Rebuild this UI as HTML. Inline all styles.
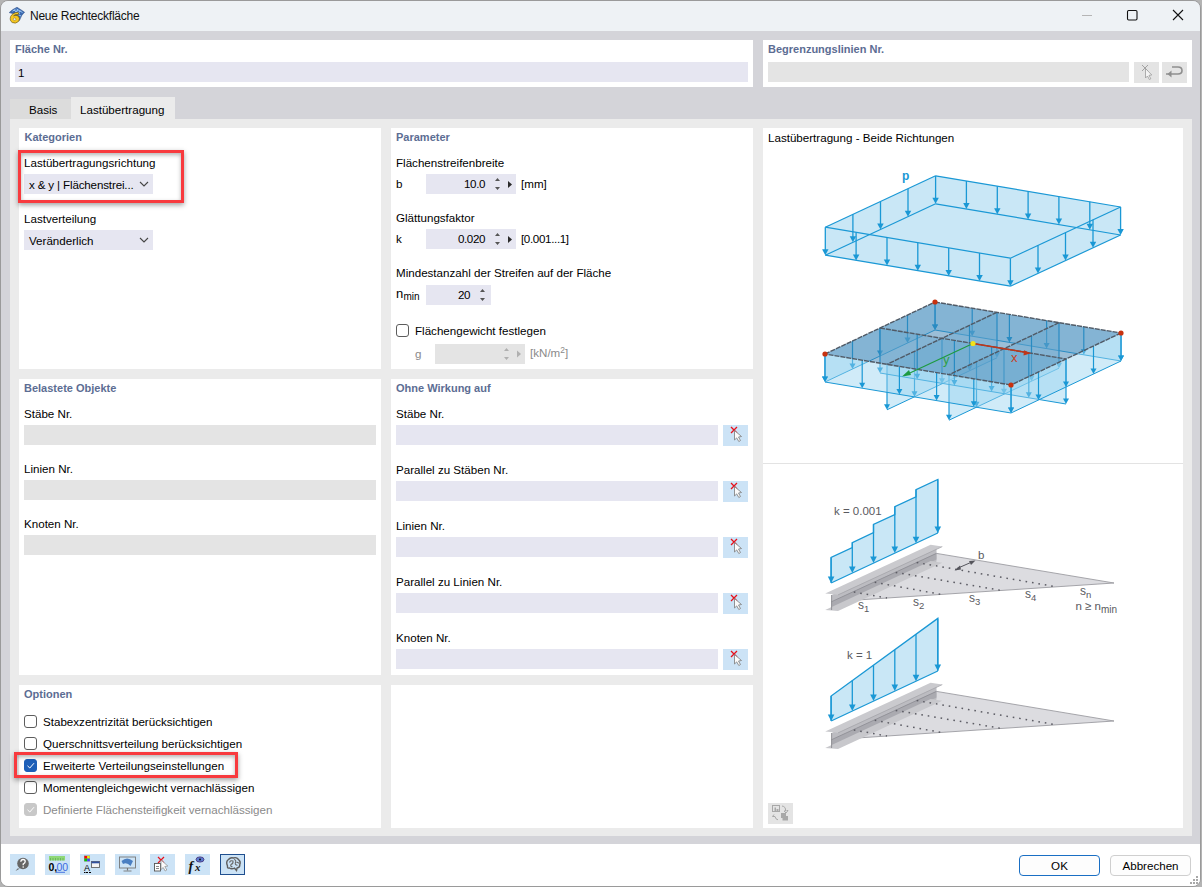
<!DOCTYPE html>
<html><head><meta charset="utf-8">
<style>
*{box-sizing:border-box;margin:0;padding:0}
html,body{width:1202px;height:887px;overflow:hidden;background:#b4b4b4}
body{position:relative;font-family:"Liberation Sans",sans-serif;font-size:11.6px;color:#000}
.a{position:absolute}
.t{position:absolute;white-space:nowrap;line-height:14px}
.h{position:absolute;white-space:nowrap;line-height:14px;font-weight:bold;font-size:11px;color:#5c6d93}
.p{position:absolute;background:#fff}
.in{position:absolute;background:#e6e6f1;height:20px}
.dis{position:absolute;background:#e4e4e4;height:20px}
.cb{position:absolute;width:13px;height:13px;border:1px solid #5d5d5d;border-radius:3px;background:#fff}
.btnb{position:absolute;width:25px;height:21px;background:#cce3f6}
</style></head><body>
<!-- window -->
<div class="a" style="left:0;top:0;width:1201px;height:887px;border:1px solid #9a9a9a;border-radius:8px;background:#d4d4d9;overflow:hidden">
  <div class="a" style="left:0;top:0;width:1199px;height:30px;background:#eef2f5"></div>
  <div class="a" style="left:0;top:843px;width:1199px;height:44px;background:#ffffff"></div>
</div>
<div class="t" style="left:30px;top:8.5px;font-size:12px;letter-spacing:-0.25px;color:#111">Neue Rechteckfläche</div>

<!-- top panels -->
<div class="p" style="left:10px;top:40px;width:743px;height:47px"></div>
<div class="h" style="left:15px;top:42px">Fläche Nr.</div>
<div class="in" style="left:15px;top:62px;width:733px"></div>
<div class="t" style="left:18px;top:66px">1</div>

<div class="p" style="left:763px;top:40px;width:429px;height:47px"></div>
<div class="h" style="left:768px;top:42px">Begrenzungslinien Nr.</div>
<div class="dis" style="left:768px;top:62px;width:361px"></div>
<div class="dis" style="left:1134px;top:62px;width:25px;height:21px"></div>
<div class="dis" style="left:1162px;top:62px;width:25px;height:21px"></div>

<!-- tabs -->
<div class="a" style="left:10px;top:99px;width:61px;height:20px;background:#dcdcdc"></div>
<div class="a" style="left:71px;top:97px;width:104px;height:22px;background:#ebebeb"></div>
<div class="t" style="left:29px;top:103px">Basis</div>
<div class="t" style="left:80px;top:103px">Lastübertragung</div>

<!-- content area -->
<div class="a" style="left:10px;top:119px;width:1182px;height:717px;background:#ebebeb"></div>

<div class="p" style="left:19px;top:128px;width:362px;height:241px"></div>
<div class="p" style="left:391px;top:128px;width:362px;height:241px"></div>
<div class="p" style="left:19px;top:379px;width:362px;height:296px"></div>
<div class="p" style="left:391px;top:379px;width:362px;height:296px"></div>
<div class="p" style="left:19px;top:685px;width:362px;height:143px"></div>
<div class="p" style="left:391px;top:685px;width:362px;height:143px"></div>
<div class="p" style="left:763px;top:128px;width:420px;height:700px"></div>

<!-- Kategorien -->
<div class="h" style="left:24.5px;top:130px">Kategorien</div>
<div class="t" style="left:24px;top:156px">Lastübertragungsrichtung</div>
<div class="in" style="left:24px;top:174px;width:129px"></div>
<div class="t" style="left:29px;top:178px;letter-spacing:-0.15px">x &amp; y | Flächenstrei...</div>
<div class="t" style="left:24px;top:212px">Lastverteilung</div>
<div class="in" style="left:24px;top:230px;width:129px"></div>
<div class="t" style="left:29px;top:234px">Veränderlich</div>


<!-- Parameter -->
<div class="h" style="left:396px;top:130px">Parameter</div>
<div class="t" style="left:396px;top:156px">Flächenstreifenbreite</div>
<div class="t" style="left:396px;top:177px">b</div>
<div class="in" style="left:426px;top:174px;width:90px"></div>
<div class="t" style="left:426px;top:177px;width:59px;text-align:right;letter-spacing:-0.4px">10.0</div>
<div class="t" style="left:521px;top:177px">[mm]</div>
<div class="t" style="left:396px;top:211px">Glättungsfaktor</div>
<div class="t" style="left:396px;top:232px">k</div>
<div class="in" style="left:426px;top:229px;width:90px"></div>
<div class="t" style="left:426px;top:232px;width:59px;text-align:right;letter-spacing:-0.4px">0.020</div>
<div class="t" style="left:521px;top:232px;letter-spacing:-0.35px">[0.001...1]</div>
<div class="t" style="left:396px;top:266px">Mindestanzahl der Streifen auf der Fläche</div>
<div class="t" style="left:396px;top:287px;font-size:13px">n</div><div class="t" style="left:403.5px;top:290px;font-size:10px">min</div>
<div class="in" style="left:426px;top:285px;width:65px"></div>
<div class="t" style="left:426px;top:288px;width:44px;text-align:right;letter-spacing:-0.4px">20</div>
<div class="cb" style="left:396px;top:324px"></div>
<div class="t" style="left:415px;top:324px">Flächengewicht festlegen</div>
<div class="t" style="left:415px;top:347px;color:#8a8a8a">g</div>
<div class="dis" style="left:435px;top:344px;width:90px"></div>
<div class="t" style="left:530px;top:346px;color:#8a8a8a">[kN/m<span style="font-size:8.5px;position:relative;top:-4px">2</span>]</div>

<!-- Belastete Objekte -->
<div class="h" style="left:24px;top:381px">Belastete Objekte</div>
<div class="t" style="left:24px;top:407px">Stäbe Nr.</div>
<div class="dis" style="left:24px;top:425px;width:352px"></div>
<div class="t" style="left:24px;top:462px">Linien Nr.</div>
<div class="dis" style="left:24px;top:480px;width:352px"></div>
<div class="t" style="left:24px;top:517px">Knoten Nr.</div>
<div class="dis" style="left:24px;top:535px;width:352px"></div>

<!-- Ohne Wirkung auf -->
<div class="h" style="left:396px;top:381px">Ohne Wirkung auf</div>
<div class="t" style="left:396px;top:407px">Stäbe Nr.</div>
<div class="in" style="left:396px;top:425px;width:322px"></div>
<div class="btnb" style="left:723px;top:425px"></div>
<div class="t" style="left:396px;top:463px">Parallel zu Stäben Nr.</div>
<div class="in" style="left:396px;top:481px;width:322px"></div>
<div class="btnb" style="left:723px;top:481px"></div>
<div class="t" style="left:396px;top:519px">Linien Nr.</div>
<div class="in" style="left:396px;top:537px;width:322px"></div>
<div class="btnb" style="left:723px;top:537px"></div>
<div class="t" style="left:396px;top:575px">Parallel zu Linien Nr.</div>
<div class="in" style="left:396px;top:593px;width:322px"></div>
<div class="btnb" style="left:723px;top:593px"></div>
<div class="t" style="left:396px;top:631px">Knoten Nr.</div>
<div class="in" style="left:396px;top:649px;width:322px"></div>
<div class="btnb" style="left:723px;top:649px"></div>

<!-- Optionen -->
<div class="h" style="left:24px;top:687px">Optionen</div>
<div class="cb" style="left:24px;top:715px"></div>
<div class="t" style="left:43px;top:715px">Stabexzentrizität berücksichtigen</div>
<div class="cb" style="left:24px;top:737px"></div>
<div class="t" style="left:43px;top:737px">Querschnittsverteilung berücksichtigen</div>
<div class="cb" style="left:24px;top:759px;background:#1d5fb8;border-color:#1d5fb8"></div>
<div class="t" style="left:43px;top:759px">Erweiterte Verteilungseinstellungen</div>
<div class="cb" style="left:24px;top:781px"></div>
<div class="t" style="left:43px;top:781px">Momentengleichgewicht vernachlässigen</div>
<div class="cb" style="left:24px;top:803px;background:#c8c8c8;border-color:#c8c8c8"></div>
<div class="t" style="left:43px;top:803px;color:#8a8a8a">Definierte Flächensteifigkeit vernachlässigen</div>

<!-- right panel -->
<div class="t" style="left:768px;top:131px">Lastübertragung - Beide Richtungen</div>
<div class="a" style="left:763px;top:463px;width:420px;height:1px;background:#e3e3e3"></div>
<div class="dis" style="left:768px;top:803px;width:25px;height:21px"></div>

<!-- bottom -->
<div class="btnb" style="left:10px;top:854px"></div>
<div class="btnb" style="left:45px;top:854px"></div>
<div class="btnb" style="left:80px;top:854px"></div>
<div class="btnb" style="left:115px;top:854px"></div>
<div class="btnb" style="left:150px;top:854px"></div>
<div class="btnb" style="left:185px;top:854px"></div>
<div class="btnb" style="left:220px;top:854px;border:1px solid #1f4f8f"></div>
<div class="a" style="left:1019px;top:855px;width:81px;height:21px;border:1px solid #1a6fc4;border-radius:4px;background:#fdfdfd"></div>
<div class="t" style="left:1019px;top:859px;width:81px;text-align:center">OK</div>
<div class="a" style="left:1110px;top:855px;width:81px;height:21px;border:1px solid #cfcfcf;border-radius:4px;background:#fdfdfd"></div>
<div class="t" style="left:1110px;top:859px;width:81px;text-align:center">Abbrechen</div>
<!--FIG--><svg class="a" style="left:0;top:0" width="1202" height="887"><polygon points="825.3,227.2 935.6,175.8 1120.6,207.0 1120.6,235.0 1010.4,286.2 825.3,255.2" fill="#c9e7f6" /><line x1="935.6" y1="175.8" x2="1120.6" y2="207.0" stroke="#1a98d5" stroke-width="1.2" /><line x1="935.6" y1="203.8" x2="1120.6" y2="235.0" stroke="#1a98d5" stroke-width="1.2" /><line x1="1120.6" y1="207.0" x2="1010.4" y2="258.2" stroke="#1a98d5" stroke-width="1.2" /><line x1="1120.6" y1="235.0" x2="1010.4" y2="286.2" stroke="#1a98d5" stroke-width="1.2" /><line x1="1010.4" y1="258.2" x2="825.3" y2="227.2" stroke="#1a98d5" stroke-width="1.2" /><line x1="1010.4" y1="286.2" x2="825.3" y2="255.2" stroke="#1a98d5" stroke-width="1.2" /><line x1="825.3" y1="227.2" x2="935.6" y2="175.8" stroke="#1a98d5" stroke-width="1.2" /><line x1="825.3" y1="255.2" x2="935.6" y2="203.8" stroke="#1a98d5" stroke-width="1.2" /><line x1="825.3" y1="227.2" x2="825.3" y2="250.2" stroke="#1a98d5" stroke-width="1.3"/><polygon points="822.1,249.2 828.5,249.2 825.3,255.2" fill="#1a98d5"/><line x1="852.9" y1="214.3" x2="852.9" y2="237.3" stroke="#1a98d5" stroke-width="1.3"/><polygon points="849.7,236.3 856.1,236.3 852.9,242.3" fill="#1a98d5"/><line x1="880.5" y1="201.5" x2="880.5" y2="224.5" stroke="#1a98d5" stroke-width="1.3"/><polygon points="877.2,223.5 883.7,223.5 880.5,229.5" fill="#1a98d5"/><line x1="908.0" y1="188.7" x2="908.0" y2="211.7" stroke="#1a98d5" stroke-width="1.3"/><polygon points="904.8,210.7 911.2,210.7 908.0,216.7" fill="#1a98d5"/><line x1="935.6" y1="175.8" x2="935.6" y2="198.8" stroke="#1a98d5" stroke-width="1.3"/><polygon points="932.4,197.8 938.8,197.8 935.6,203.8" fill="#1a98d5"/><line x1="966.4" y1="181.0" x2="966.4" y2="204.0" stroke="#1a98d5" stroke-width="1.3"/><polygon points="963.2,203.0 969.6,203.0 966.4,209.0" fill="#1a98d5"/><line x1="997.3" y1="186.2" x2="997.3" y2="209.2" stroke="#1a98d5" stroke-width="1.3"/><polygon points="994.1,208.2 1000.5,208.2 997.3,214.2" fill="#1a98d5"/><line x1="1028.1" y1="191.4" x2="1028.1" y2="214.4" stroke="#1a98d5" stroke-width="1.3"/><polygon points="1024.9,213.4 1031.3,213.4 1028.1,219.4" fill="#1a98d5"/><line x1="1058.9" y1="196.6" x2="1058.9" y2="219.6" stroke="#1a98d5" stroke-width="1.3"/><polygon points="1055.7,218.6 1062.1,218.6 1058.9,224.6" fill="#1a98d5"/><line x1="1089.8" y1="201.8" x2="1089.8" y2="224.8" stroke="#1a98d5" stroke-width="1.3"/><polygon points="1086.6,223.8 1093.0,223.8 1089.8,229.8" fill="#1a98d5"/><line x1="1120.6" y1="207.0" x2="1120.6" y2="230.0" stroke="#1a98d5" stroke-width="1.3"/><polygon points="1117.4,229.0 1123.8,229.0 1120.6,235.0" fill="#1a98d5"/><line x1="1093.0" y1="219.8" x2="1093.0" y2="242.8" stroke="#1a98d5" stroke-width="1.3"/><polygon points="1089.8,241.8 1096.2,241.8 1093.0,247.8" fill="#1a98d5"/><line x1="1065.5" y1="232.6" x2="1065.5" y2="255.6" stroke="#1a98d5" stroke-width="1.3"/><polygon points="1062.3,254.6 1068.7,254.6 1065.5,260.6" fill="#1a98d5"/><line x1="1038.0" y1="245.4" x2="1038.0" y2="268.4" stroke="#1a98d5" stroke-width="1.3"/><polygon points="1034.8,267.4 1041.2,267.4 1038.0,273.4" fill="#1a98d5"/><line x1="1010.4" y1="258.2" x2="1010.4" y2="281.2" stroke="#1a98d5" stroke-width="1.3"/><polygon points="1007.2,280.2 1013.6,280.2 1010.4,286.2" fill="#1a98d5"/><line x1="979.5" y1="253.0" x2="979.5" y2="276.0" stroke="#1a98d5" stroke-width="1.3"/><polygon points="976.3,275.0 982.8,275.0 979.5,281.0" fill="#1a98d5"/><line x1="948.7" y1="247.9" x2="948.7" y2="270.9" stroke="#1a98d5" stroke-width="1.3"/><polygon points="945.5,269.9 951.9,269.9 948.7,275.9" fill="#1a98d5"/><line x1="917.8" y1="242.7" x2="917.8" y2="265.7" stroke="#1a98d5" stroke-width="1.3"/><polygon points="914.6,264.7 921.0,264.7 917.8,270.7" fill="#1a98d5"/><line x1="887.0" y1="237.5" x2="887.0" y2="260.5" stroke="#1a98d5" stroke-width="1.3"/><polygon points="883.8,259.5 890.2,259.5 887.0,265.5" fill="#1a98d5"/><line x1="856.1" y1="232.4" x2="856.1" y2="255.4" stroke="#1a98d5" stroke-width="1.3"/><polygon points="852.9,254.4 859.4,254.4 856.1,260.4" fill="#1a98d5"/><text x="902" y="180" font-family="Liberation Sans" font-weight="bold" font-size="12" fill="#1a98d5">p</text><polygon points="935.0,302.0 1121.0,333.0 1121.0,361.0 935.0,330.0" fill="rgba(150,210,240,0.45)" /><line x1="935.0" y1="330.0" x2="1121.0" y2="361.0" stroke="#1a98d5" stroke-width="1" /><line x1="935.0" y1="302.0" x2="935.0" y2="325.5" stroke="#1a98d5" stroke-width="1.2"/><polygon points="932.0,324.5 938.0,324.5 935.0,330.0" fill="#1a98d5"/><line x1="972.2" y1="308.2" x2="972.2" y2="331.7" stroke="#1a98d5" stroke-width="1.2"/><polygon points="969.2,330.7 975.2,330.7 972.2,336.2" fill="#1a98d5"/><line x1="1009.4" y1="314.4" x2="1009.4" y2="337.9" stroke="#1a98d5" stroke-width="1.2"/><polygon points="1006.4,336.9 1012.4,336.9 1009.4,342.4" fill="#1a98d5"/><line x1="1046.6" y1="320.6" x2="1046.6" y2="344.1" stroke="#1a98d5" stroke-width="1.2"/><polygon points="1043.6,343.1 1049.6,343.1 1046.6,348.6" fill="#1a98d5"/><line x1="1083.8" y1="326.8" x2="1083.8" y2="350.3" stroke="#1a98d5" stroke-width="1.2"/><polygon points="1080.8,349.3 1086.8,349.3 1083.8,354.8" fill="#1a98d5"/><line x1="1121.0" y1="333.0" x2="1121.0" y2="356.5" stroke="#1a98d5" stroke-width="1.2"/><polygon points="1118.0,355.5 1124.0,355.5 1121.0,361.0" fill="#1a98d5"/><polygon points="935.0,302.0 825.0,354.0 825.0,382.0 935.0,330.0" fill="rgba(150,210,240,0.45)" /><line x1="935.0" y1="330.0" x2="825.0" y2="382.0" stroke="#1a98d5" stroke-width="1" /><line x1="935.0" y1="302.0" x2="935.0" y2="325.5" stroke="#1a98d5" stroke-width="1.2"/><polygon points="932.0,324.5 938.0,324.5 935.0,330.0" fill="#1a98d5"/><line x1="907.5" y1="315.0" x2="907.5" y2="338.5" stroke="#1a98d5" stroke-width="1.2"/><polygon points="904.5,337.5 910.5,337.5 907.5,343.0" fill="#1a98d5"/><line x1="880.0" y1="328.0" x2="880.0" y2="351.5" stroke="#1a98d5" stroke-width="1.2"/><polygon points="877.0,350.5 883.0,350.5 880.0,356.0" fill="#1a98d5"/><line x1="852.5" y1="341.0" x2="852.5" y2="364.5" stroke="#1a98d5" stroke-width="1.2"/><polygon points="849.5,363.5 855.5,363.5 852.5,369.0" fill="#1a98d5"/><line x1="825.0" y1="354.0" x2="825.0" y2="377.5" stroke="#1a98d5" stroke-width="1.2"/><polygon points="822.0,376.5 828.0,376.5 825.0,382.0" fill="#1a98d5"/><polygon points="997.0,312.3 887.0,364.3 887.0,409.8 997.0,357.8" fill="rgba(150,210,240,0.45)" /><line x1="997.0" y1="357.8" x2="887.0" y2="409.8" stroke="#1a98d5" stroke-width="1" /><line x1="997.0" y1="312.3" x2="997.0" y2="353.3" stroke="#1a98d5" stroke-width="1.2"/><polygon points="994.0,352.3 1000.0,352.3 997.0,357.8" fill="#1a98d5"/><line x1="969.5" y1="325.3" x2="969.5" y2="366.3" stroke="#1a98d5" stroke-width="1.2"/><polygon points="966.5,365.3 972.5,365.3 969.5,370.8" fill="#1a98d5"/><line x1="942.0" y1="338.3" x2="942.0" y2="379.3" stroke="#1a98d5" stroke-width="1.2"/><polygon points="939.0,378.3 945.0,378.3 942.0,383.8" fill="#1a98d5"/><line x1="914.5" y1="351.3" x2="914.5" y2="392.3" stroke="#1a98d5" stroke-width="1.2"/><polygon points="911.5,391.3 917.5,391.3 914.5,396.8" fill="#1a98d5"/><line x1="887.0" y1="364.3" x2="887.0" y2="405.3" stroke="#1a98d5" stroke-width="1.2"/><polygon points="884.0,404.3 890.0,404.3 887.0,409.8" fill="#1a98d5"/><polygon points="1059.0,322.7 949.0,374.7 949.0,420.2 1059.0,368.2" fill="rgba(150,210,240,0.45)" /><line x1="1059.0" y1="368.2" x2="949.0" y2="420.2" stroke="#1a98d5" stroke-width="1" /><line x1="1059.0" y1="322.7" x2="1059.0" y2="363.7" stroke="#1a98d5" stroke-width="1.2"/><polygon points="1056.0,362.7 1062.0,362.7 1059.0,368.2" fill="#1a98d5"/><line x1="1031.5" y1="335.7" x2="1031.5" y2="376.7" stroke="#1a98d5" stroke-width="1.2"/><polygon points="1028.5,375.7 1034.5,375.7 1031.5,381.2" fill="#1a98d5"/><line x1="1004.0" y1="348.7" x2="1004.0" y2="389.7" stroke="#1a98d5" stroke-width="1.2"/><polygon points="1001.0,388.7 1007.0,388.7 1004.0,394.2" fill="#1a98d5"/><line x1="976.5" y1="361.7" x2="976.5" y2="402.7" stroke="#1a98d5" stroke-width="1.2"/><polygon points="973.5,401.7 979.5,401.7 976.5,407.2" fill="#1a98d5"/><line x1="949.0" y1="374.7" x2="949.0" y2="415.7" stroke="#1a98d5" stroke-width="1.2"/><polygon points="946.0,414.7 952.0,414.7 949.0,420.2" fill="#1a98d5"/><polygon points="880.0,328.0 1066.0,359.0 1066.0,404.0 880.0,373.0" fill="rgba(150,210,240,0.45)" /><line x1="880.0" y1="373.0" x2="1066.0" y2="404.0" stroke="#1a98d5" stroke-width="1" /><line x1="880.0" y1="328.0" x2="880.0" y2="368.5" stroke="#1a98d5" stroke-width="1.2"/><polygon points="877.0,367.5 883.0,367.5 880.0,373.0" fill="#1a98d5"/><line x1="917.2" y1="334.2" x2="917.2" y2="374.7" stroke="#1a98d5" stroke-width="1.2"/><polygon points="914.2,373.7 920.2,373.7 917.2,379.2" fill="#1a98d5"/><line x1="954.4" y1="340.4" x2="954.4" y2="380.9" stroke="#1a98d5" stroke-width="1.2"/><polygon points="951.4,379.9 957.4,379.9 954.4,385.4" fill="#1a98d5"/><line x1="991.6" y1="346.6" x2="991.6" y2="387.1" stroke="#1a98d5" stroke-width="1.2"/><polygon points="988.6,386.1 994.6,386.1 991.6,391.6" fill="#1a98d5"/><line x1="1028.8" y1="352.8" x2="1028.8" y2="393.3" stroke="#1a98d5" stroke-width="1.2"/><polygon points="1025.8,392.3 1031.8,392.3 1028.8,397.8" fill="#1a98d5"/><line x1="1066.0" y1="359.0" x2="1066.0" y2="399.5" stroke="#1a98d5" stroke-width="1.2"/><polygon points="1063.0,398.5 1069.0,398.5 1066.0,404.0" fill="#1a98d5"/><polygon points="1121.0,333.0 1011.0,385.0 1011.0,413.0 1121.0,361.0" fill="rgba(150,210,240,0.45)" /><line x1="1121.0" y1="361.0" x2="1011.0" y2="413.0" stroke="#1a98d5" stroke-width="1" /><line x1="1121.0" y1="333.0" x2="1121.0" y2="356.5" stroke="#1a98d5" stroke-width="1.2"/><polygon points="1118.0,355.5 1124.0,355.5 1121.0,361.0" fill="#1a98d5"/><line x1="1093.5" y1="346.0" x2="1093.5" y2="369.5" stroke="#1a98d5" stroke-width="1.2"/><polygon points="1090.5,368.5 1096.5,368.5 1093.5,374.0" fill="#1a98d5"/><line x1="1066.0" y1="359.0" x2="1066.0" y2="382.5" stroke="#1a98d5" stroke-width="1.2"/><polygon points="1063.0,381.5 1069.0,381.5 1066.0,387.0" fill="#1a98d5"/><line x1="1038.5" y1="372.0" x2="1038.5" y2="395.5" stroke="#1a98d5" stroke-width="1.2"/><polygon points="1035.5,394.5 1041.5,394.5 1038.5,400.0" fill="#1a98d5"/><line x1="1011.0" y1="385.0" x2="1011.0" y2="408.5" stroke="#1a98d5" stroke-width="1.2"/><polygon points="1008.0,407.5 1014.0,407.5 1011.0,413.0" fill="#1a98d5"/><polygon points="825.0,354.0 1011.0,385.0 1011.0,413.0 825.0,382.0" fill="rgba(150,210,240,0.45)" /><line x1="825.0" y1="382.0" x2="1011.0" y2="413.0" stroke="#1a98d5" stroke-width="1" /><line x1="825.0" y1="354.0" x2="825.0" y2="377.5" stroke="#1a98d5" stroke-width="1.2"/><polygon points="822.0,376.5 828.0,376.5 825.0,382.0" fill="#1a98d5"/><line x1="862.2" y1="360.2" x2="862.2" y2="383.7" stroke="#1a98d5" stroke-width="1.2"/><polygon points="859.2,382.7 865.2,382.7 862.2,388.2" fill="#1a98d5"/><line x1="899.4" y1="366.4" x2="899.4" y2="389.9" stroke="#1a98d5" stroke-width="1.2"/><polygon points="896.4,388.9 902.4,388.9 899.4,394.4" fill="#1a98d5"/><line x1="936.6" y1="372.6" x2="936.6" y2="396.1" stroke="#1a98d5" stroke-width="1.2"/><polygon points="933.6,395.1 939.6,395.1 936.6,400.6" fill="#1a98d5"/><line x1="973.8" y1="378.8" x2="973.8" y2="402.3" stroke="#1a98d5" stroke-width="1.2"/><polygon points="970.8,401.3 976.8,401.3 973.8,406.8" fill="#1a98d5"/><line x1="1011.0" y1="385.0" x2="1011.0" y2="408.5" stroke="#1a98d5" stroke-width="1.2"/><polygon points="1008.0,407.5 1014.0,407.5 1011.0,413.0" fill="#1a98d5"/><polygon points="935.0,302.0 1121.0,333.0 1011.0,385.0 825.0,354.0" fill="rgba(55,125,175,0.5)" /><line x1="935.0" y1="302.0" x2="1121.0" y2="333.0" stroke="#505a66" stroke-width="1.4" stroke-dasharray="5,1"/><line x1="1121.0" y1="333.0" x2="1011.0" y2="385.0" stroke="#505a66" stroke-width="1.4" stroke-dasharray="5,1"/><line x1="1011.0" y1="385.0" x2="825.0" y2="354.0" stroke="#505a66" stroke-width="1.4" stroke-dasharray="5,1"/><line x1="825.0" y1="354.0" x2="935.0" y2="302.0" stroke="#505a66" stroke-width="1.4" stroke-dasharray="5,1"/><line x1="997.0" y1="312.3" x2="887.0" y2="364.3" stroke="#505a66" stroke-width="1.4" stroke-dasharray="5,1"/><line x1="1059.0" y1="322.7" x2="949.0" y2="374.7" stroke="#505a66" stroke-width="1.4" stroke-dasharray="5,1"/><line x1="880.0" y1="328.0" x2="1066.0" y2="359.0" stroke="#505a66" stroke-width="1.4" stroke-dasharray="5,1"/><line x1="973.0" y1="343.5" x2="1025.0" y2="352.2" stroke="#c0361a" stroke-width="1.6" /><polygon points="1031.0,353.2 1024.0,350.2 1023.5,355.5" fill="#c0361a" /><line x1="973.0" y1="343.5" x2="904.0" y2="375.8" stroke="#1e9a40" stroke-width="1.2" /><polygon points="902.0,376.5 909.0,370.0 911.0,375.0" fill="#1e9a40" /><text x="1011" y="362" font-family="Liberation Sans" font-size="13" fill="#c8401e">x</text><text x="943" y="364" font-family="Liberation Sans" font-size="13" fill="#2ea04a">y</text><circle cx="935" cy="302" r="2.6" fill="#c8320f"/><circle cx="1121" cy="333" r="2.6" fill="#c8320f"/><circle cx="1011" cy="385" r="2.6" fill="#c8320f"/><circle cx="825" cy="354" r="2.6" fill="#c8320f"/><circle cx="973.0" cy="343.5" r="2.6" fill="#f2e21a"/><polygon points="831.6,601.7 936.5,553.4 1114.0,583.0" fill="#dcdce0" stroke="#9c9ca2" stroke-width="0.9"/><polygon points="831.6,595.0 936.5,546.4 936.5,561.4 831.6,610.0" fill="#bcbcc1" /><polygon points="831.6,601.7 936.5,553.1 936.5,559.4 831.6,608.0" fill="#aaaab0" /><line x1="831.6" y1="601.7" x2="936.5" y2="553.4" stroke="#909096" stroke-width="0.9" /><polygon points="825.2,609.9 838.0,611.0 942.3,562.7 930.6,561.0" fill="#c8c8cc" /><polygon points="825.2,593.6 838.0,594.7 942.3,546.4 930.6,544.7" fill="#cacace" /><line x1="838.0" y1="594.9" x2="942.3" y2="546.6" stroke="#a4a4aa" stroke-width="0.8" /><line x1="831.6" y1="595.0" x2="831.6" y2="610.0" stroke="#8a8a90" stroke-width="0.9" /><line x1="853.8" y1="592.0" x2="887.0" y2="598.0" stroke="#5c5c64" stroke-width="1.5" stroke-dasharray="1.6,4.9" stroke-linecap="butt"/><line x1="874.7" y1="582.3" x2="941.0" y2="594.4" stroke="#5c5c64" stroke-width="1.5" stroke-dasharray="1.6,4.9" stroke-linecap="butt"/><line x1="895.7" y1="572.4" x2="1000.7" y2="590.3" stroke="#5c5c64" stroke-width="1.5" stroke-dasharray="1.6,4.9" stroke-linecap="butt"/><line x1="916.7" y1="562.5" x2="1055.6" y2="586.7" stroke="#5c5c64" stroke-width="1.5" stroke-dasharray="1.6,4.9" stroke-linecap="butt"/><polygon points="831.1,583.0 831.1,557.5 852.3,547.6 852.3,542.6 873.5,532.6 873.5,524.5 894.8,514.5 894.8,506.7 916.0,496.8 916.0,489.7 937.8,479.5 937.8,533.0" fill="#c9e7f6" /><path d="M831.1,583.0 L831.1,557.5 L852.3,547.6 L852.3,542.6 L873.5,532.6 L873.5,524.5 L894.8,514.5 L894.8,506.7 L916.0,496.8 L916.0,489.7 L937.8,479.5 L937.8,533.0" fill="none" stroke="#1a98d5" stroke-width="1.3"/><line x1="831.1" y1="557.5" x2="831.1" y2="577.5" stroke="#1a98d5" stroke-width="1.3"/><polygon points="827.8,576.5 834.4,576.5 831.1,583.0" fill="#1a98d5"/><line x1="852.3" y1="542.6" x2="852.3" y2="567.6" stroke="#1a98d5" stroke-width="1.3"/><polygon points="849.0,566.6 855.6,566.6 852.3,573.1" fill="#1a98d5"/><line x1="873.5" y1="524.5" x2="873.5" y2="557.6" stroke="#1a98d5" stroke-width="1.3"/><polygon points="870.2,556.6 876.8,556.6 873.5,563.1" fill="#1a98d5"/><line x1="894.8" y1="506.7" x2="894.8" y2="547.6" stroke="#1a98d5" stroke-width="1.3"/><polygon points="891.5,546.6 898.1,546.6 894.8,553.1" fill="#1a98d5"/><line x1="916.0" y1="489.7" x2="916.0" y2="537.7" stroke="#1a98d5" stroke-width="1.3"/><polygon points="912.7,536.7 919.3,536.7 916.0,543.2" fill="#1a98d5"/><line x1="937.8" y1="479.5" x2="937.8" y2="527.5" stroke="#1a98d5" stroke-width="1.3"/><polygon points="934.5,526.5 941.1,526.5 937.8,533.0" fill="#1a98d5"/><line x1="831.1" y1="583.0" x2="937.8" y2="533.0" stroke="#1a98d5" stroke-width="1.3" /><polygon points="831.6,739.7 936.5,691.4 1114.0,721.0" fill="#dcdce0" stroke="#9c9ca2" stroke-width="0.9"/><polygon points="831.6,733.0 936.5,684.4 936.5,699.4 831.6,748.0" fill="#bcbcc1" /><polygon points="831.6,739.7 936.5,691.1 936.5,697.4 831.6,746.0" fill="#aaaab0" /><line x1="831.6" y1="739.7" x2="936.5" y2="691.4" stroke="#909096" stroke-width="0.9" /><polygon points="825.2,747.9 838.0,749.0 942.3,700.7 930.6,699.0" fill="#c8c8cc" /><polygon points="825.2,731.6 838.0,732.7 942.3,684.4 930.6,682.7" fill="#cacace" /><line x1="838.0" y1="732.9" x2="942.3" y2="684.6" stroke="#a4a4aa" stroke-width="0.8" /><line x1="831.6" y1="733.0" x2="831.6" y2="748.0" stroke="#8a8a90" stroke-width="0.9" /><line x1="853.8" y1="730.0" x2="887.0" y2="736.0" stroke="#5c5c64" stroke-width="1.5" stroke-dasharray="1.6,4.9" stroke-linecap="butt"/><line x1="874.7" y1="720.3" x2="941.0" y2="732.4" stroke="#5c5c64" stroke-width="1.5" stroke-dasharray="1.6,4.9" stroke-linecap="butt"/><line x1="895.7" y1="710.4" x2="1000.7" y2="728.3" stroke="#5c5c64" stroke-width="1.5" stroke-dasharray="1.6,4.9" stroke-linecap="butt"/><line x1="916.7" y1="700.5" x2="1055.6" y2="724.7" stroke="#5c5c64" stroke-width="1.5" stroke-dasharray="1.6,4.9" stroke-linecap="butt"/><polygon points="831.1,721.0 831.1,696.0 937.8,618.4 937.8,671.0" fill="#c9e7f6" /><path d="M831.1,721.0 L831.1,696.0 L937.8,618.4 L937.8,671.0" fill="none" stroke="#1a98d5" stroke-width="1.3"/><line x1="831.1" y1="696.0" x2="831.1" y2="715.5" stroke="#1a98d5" stroke-width="1.3"/><polygon points="827.8,714.5 834.4,714.5 831.1,721.0" fill="#1a98d5"/><line x1="852.3" y1="680.6" x2="852.3" y2="705.6" stroke="#1a98d5" stroke-width="1.3"/><polygon points="849.0,704.6 855.6,704.6 852.3,711.1" fill="#1a98d5"/><line x1="873.5" y1="665.2" x2="873.5" y2="695.6" stroke="#1a98d5" stroke-width="1.3"/><polygon points="870.2,694.6 876.8,694.6 873.5,701.1" fill="#1a98d5"/><line x1="894.8" y1="649.7" x2="894.8" y2="685.6" stroke="#1a98d5" stroke-width="1.3"/><polygon points="891.5,684.6 898.1,684.6 894.8,691.1" fill="#1a98d5"/><line x1="916.0" y1="634.3" x2="916.0" y2="675.7" stroke="#1a98d5" stroke-width="1.3"/><polygon points="912.7,674.7 919.3,674.7 916.0,681.2" fill="#1a98d5"/><line x1="937.8" y1="618.4" x2="937.8" y2="665.5" stroke="#1a98d5" stroke-width="1.3"/><polygon points="934.5,664.5 941.1,664.5 937.8,671.0" fill="#1a98d5"/><line x1="831.1" y1="721.0" x2="937.8" y2="671.0" stroke="#1a98d5" stroke-width="1.3" /><text x="834" y="515" font-family="Liberation Sans" font-size="11.5" fill="#5a5a60">k = 0.001</text><text x="847" y="659" font-family="Liberation Sans" font-size="11.5" fill="#5a5a60">k = 1</text><text x="978" y="558.5" font-family="Liberation Sans" font-size="11.5" fill="#5a5a60">b</text><line x1="957.0" y1="568.5" x2="973.0" y2="561.5" stroke="#55555c" stroke-width="1" /><polygon points="954.5,570.5 960.0,565.5 961.0,569.5" fill="#55555c" /><polygon points="975.5,560.5 969.0,561.0 971.0,565.0" fill="#55555c" /><text x="858" y="608.5" font-family="Liberation Sans" font-size="12" fill="#5a5a60">s<tspan font-size="9.5" dy="3">1</tspan></text><text x="913" y="606" font-family="Liberation Sans" font-size="12" fill="#5a5a60">s<tspan font-size="9.5" dy="3">2</tspan></text><text x="969" y="601.5" font-family="Liberation Sans" font-size="12" fill="#5a5a60">s<tspan font-size="9.5" dy="3">3</tspan></text><text x="1025" y="597.5" font-family="Liberation Sans" font-size="12" fill="#5a5a60">s<tspan font-size="9.5" dy="3">4</tspan></text><text x="1080" y="595" font-family="Liberation Sans" font-size="12" fill="#5a5a60">s<tspan font-size="9.5" dy="3">n</tspan></text><text x="1075.5" y="610" font-family="Liberation Sans" font-size="11.5" fill="#5a5a60">n ≥ n<tspan font-size="10" dy="3">min</tspan></text></svg><!--/FIG-->
<!--ICONS--><div class="a" style="left:18px;top:150px;width:166px;height:53px;border:3px solid #f83a3e;box-shadow:0 2px 5px rgba(0,0,0,.38), inset 0 2px 4px rgba(0,0,0,.3)"></div>
<div class="a" style="left:14px;top:752px;width:224px;height:26px;border:3px solid #f83a3e;box-shadow:0 2px 5px rgba(0,0,0,.38), inset 0 2px 4px rgba(0,0,0,.3)"></div><svg class="a" style="left:0;top:0" width="1202" height="887">
<!-- title icon -->
<g>
<path d="M9.2,12.6 Q12,9.5 17,7.2 L24.6,12.2 Q21.5,14.5 19.5,20.5 L16,16 Q13,13 9.2,12.6 Z" fill="#3a68b0" stroke="#2a4a80" stroke-width="0.5"/>
<path d="M12.5,11.2 L15.5,9.3 M15,12 L18,10 M17.5,13 L20.5,11 M14,10.2 L20,13.5 M16.5,9 L22.5,12.5 M18,14.5 L21,16" stroke="#9cc8f4" stroke-width="1" fill="none"/>
<path d="M18.2,12.3 Q12.6,12.4 10.6,16.6 Q9.3,20.6 12.2,22.5 Q15.8,24.2 18.6,21.4 Q20.4,18.5 18.4,16.3 Q16.2,14.6 13.6,15.8 Q14.6,14.3 18.8,14.6 Z" fill="#f4c620" stroke="#5a4a18" stroke-width="0.6"/>
<circle cx="14.6" cy="19.2" r="1.3" fill="#e8e8e8" stroke="#6a5a20" stroke-width="0.4"/>
</g>
<!-- window controls -->
<line x1="1082" y1="15.5" x2="1092" y2="15.5" stroke="#b5b5b5" stroke-width="1"/>
<rect x="1127.5" y="10.5" width="9.5" height="9.5" rx="1.2" fill="none" stroke="#111" stroke-width="1.1"/>
<path d="M1173,10 L1183,20 M1183,10 L1173,20" stroke="#111" stroke-width="1.1"/>
<!-- Begrenzungslinien buttons -->
<path d="M1142,65 L1148,71 M1148,65 L1142,71" stroke="#9a9a9a" stroke-width="0.9"/>
<path d="M1145.5,68.5 L1145.5,78 L1147.5,76 L1149.3,79.5 L1150.8,78.8 L1149,75.3 L1151.8,75 Z" fill="#f4f4f4" stroke="#9c9c9c" stroke-width="0.8"/>
<path d="M1166,74 L1178,74 Q1182,74 1182,70.5 Q1182,67 1178,67 L1172,67" fill="none" stroke="#8e8e8e" stroke-width="1.6"/>
<path d="M1167.5,74 L1171.5,70.5 L1171.5,77.5 Z" fill="#8e8e8e"/>
<!-- red highlight boxes -->
<!-- chevrons -->
<path d="M140,182 L144,186 L148,182" fill="none" stroke="#454545" stroke-width="1.1"/>
<path d="M140,238 L144,242 L148,238" fill="none" stroke="#454545" stroke-width="1.1"/>
<!-- spinners -->
<g fill="#555">
<path d="M495,181 L497.5,178 L500,181 Z M495,187 L497.5,190 L500,187 Z"/>
<path d="M508,181 L512,184.5 L508,188 Z" fill="#2a2a2a"/>
<path d="M495,236 L497.5,233 L500,236 Z M495,242 L497.5,245 L500,242 Z"/>
<path d="M508,236 L512,239.5 L508,243 Z" fill="#2a2a2a"/>
<path d="M480,292 L482.5,289 L485,292 Z M480,298 L482.5,301 L485,298 Z"/>
</g>
<g fill="#b0b0b0">
<path d="M504,351 L506.5,348 L509,351 Z M504,357 L506.5,360 L509,357 Z"/>
<path d="M517,350.5 L521,354 L517,357.5 Z"/>
</g>
<!-- pick buttons -->
<g id="pk">
<path d="M731,427 L737,433 M737,427 L731,433" stroke="#e8101a" stroke-width="1.3"/>
<path d="M734.5,430.5 L734.5,440 L736.7,437.9 L738.8,441.5 L740.5,440.5 L738.5,437 L741.5,436.5 Z" fill="#fbfbfb" stroke="#7a7a7a" stroke-width="0.8"/>
</g>
<use href="#pk" y="56"/>
<use href="#pk" y="112"/>
<use href="#pk" y="168"/>
<use href="#pk" y="224"/>
<!-- checkbox checks -->
<path d="M27.5,765.8 L29.8,768 L34,763.2" fill="none" stroke="#fff" stroke-width="1"/>
<path d="M27.5,809.8 L29.8,812 L34,807.2" fill="none" stroke="#fff" stroke-width="1"/>
<!-- right panel small button icon -->
<g fill="#a8a8a8">
<rect x="772.5" y="805.5" width="7" height="6" fill="none" stroke="#a8a8a8" stroke-width="1"/>
<rect x="774.5" y="807.5" width="1.5" height="3.5"/><rect x="776.5" y="809" width="2" height="2"/>
<path d="M782,806 Q786,806.5 785.5,811 L784,811 L786,813 L788,810.5 L786.5,810.5" fill="none" stroke="#a8a8a8" stroke-width="1"/>
<path d="M774,814.5 L772.5,816.5 L775,816.5 Q775.5,819.5 778,819.8" fill="none" stroke="#a8a8a8" stroke-width="1"/>
<rect x="781" y="813" width="5" height="5"/><rect x="782.5" y="816" width="5.5" height="4.5"/>
</g>
<!-- bottom toolbar icons -->
<g>
<circle cx="23" cy="863.5" r="5.8" fill="#666"/>
<path d="M17.5,868.5 L15.5,871 L20,868.5 Z" fill="#666"/>
<path d="M20.8,861.8 Q21,859.5 23,859.5 Q25.2,859.5 25.2,861.5 Q25.2,863 23.2,864 L23.2,865.2" fill="none" stroke="#fff" stroke-width="1.3"/>
<circle cx="23.2" cy="867" r="0.8" fill="#fff"/>
</g>
<g>
<rect x="49" y="856" width="16" height="4.5" fill="#8fd878"/>
<path d="M50.5,858 v2.5 M53,858 v2.5 M55.5,858 v2.5 M58,858 v2.5 M60.5,858 v2.5 M63,858 v2.5" stroke="#5aa850" stroke-width="0.7"/>
<text x="48.5" y="870.5" font-family="Liberation Sans" font-weight="bold" font-size="10.5" fill="#000">0,</text>
<text x="56.5" y="870.5" font-family="Liberation Sans" font-size="10.5" fill="#3a6ae0">00</text>
<line x1="56" y1="872.3" x2="65" y2="872.3" stroke="#3a6ae0" stroke-width="0.9"/>
</g>
<g>
<rect x="84" y="855.5" width="6" height="6" fill="#888"/>
<rect x="84.5" y="856" width="2.5" height="2.5" fill="#f00"/><rect x="87.2" y="856" width="2.5" height="2.5" fill="#ee0"/>
<rect x="84.5" y="858.7" width="2.5" height="2.5" fill="#0c0"/><rect x="87.2" y="858.7" width="2.5" height="2.5" fill="#44f"/>
<text x="84" y="871" font-family="Liberation Sans" font-size="9" fill="#000">A</text>
<rect x="91.5" y="861.5" width="8" height="6" fill="#f4f4f4" stroke="#666" stroke-width="0.9"/>
<rect x="91.5" y="861.5" width="8" height="1.8" fill="#3050a0"/>
<path d="M84,872.5 h1.5 M86,872.5 h2 M89,872.5 h2" stroke="#000" stroke-width="1"/>
</g>
<g>
<rect x="119.5" y="857" width="16" height="11" fill="none" stroke="#777" stroke-width="0.9"/>
<path d="M121.5,861 Q127,856 133,861 L130.5,866 Q127,862 123,864 Z" fill="#4a7fc2"/>
<line x1="127.5" y1="868" x2="127.5" y2="870.5" stroke="#777" stroke-width="1.2"/>
<line x1="123.5" y1="871" x2="131.5" y2="871" stroke="#777" stroke-width="0.9"/>
</g>
<g>
<path d="M158,857 L164,863 M164,857 L158,863" stroke="#e8101a" stroke-width="1.2"/>
<rect x="154.5" y="863.5" width="6" height="7.5" fill="#fff" stroke="#555" stroke-width="0.9"/>
<path d="M156,866.5 h3 M156,868.5 h3" stroke="#555" stroke-width="0.7"/>
<path d="M161,860 L161,869.5 L163.2,867.5 L165.2,871 L166.8,870 L164.8,866.5 L167.8,866 Z" fill="#fbfbfb" stroke="#888" stroke-width="0.7"/>
</g>
<g>
<text x="188.5" y="871" font-family="Liberation Serif" font-style="italic" font-weight="bold" font-size="14" fill="#111">f</text>
<text x="195" y="871" font-family="Liberation Serif" font-style="italic" font-weight="bold" font-size="11" fill="#111">x</text>
<ellipse cx="200" cy="859.5" rx="4" ry="2.6" fill="#5a7ad0" stroke="#4a3a80" stroke-width="0.9"/>
<circle cx="200" cy="859.5" r="1" fill="#112"/>
</g>
<g>
<path d="M227.5,866 Q225.5,861.5 228.5,859.5 Q230.5,857 233.5,858 Q236.5,856.8 238.5,859.5 Q241,861.5 239.8,864.5 Q240,867.5 237,868 L236.5,870.5 L234.5,868.2 Q231.5,869.5 229.5,868 Q227,868.5 227.5,866 Z" fill="none" stroke="#5e5e5e" stroke-width="1.4"/>
<path d="M229.5,862.5 Q230.5,860 233,861 Q233.5,863.5 231,864.5 Q230,866.5 232.5,866.8 M234,859.5 Q236.5,860 235.5,862.5 Q234.5,865 237.5,865.2 M236.5,862.5 Q238.5,862 238.5,863.5" fill="none" stroke="#6a6a6a" stroke-width="1.1"/>
</g>
<g fill="#a8a8a8"><rect x="1196" y="876" width="2" height="2"/><rect x="1193" y="879" width="2" height="2"/><rect x="1196" y="879" width="2" height="2"/><rect x="1190" y="882" width="2" height="2"/><rect x="1193" y="882" width="2" height="2"/><rect x="1196" y="882" width="2" height="2"/></g>
</svg>
<!--/ICONS-->
</body></html>
